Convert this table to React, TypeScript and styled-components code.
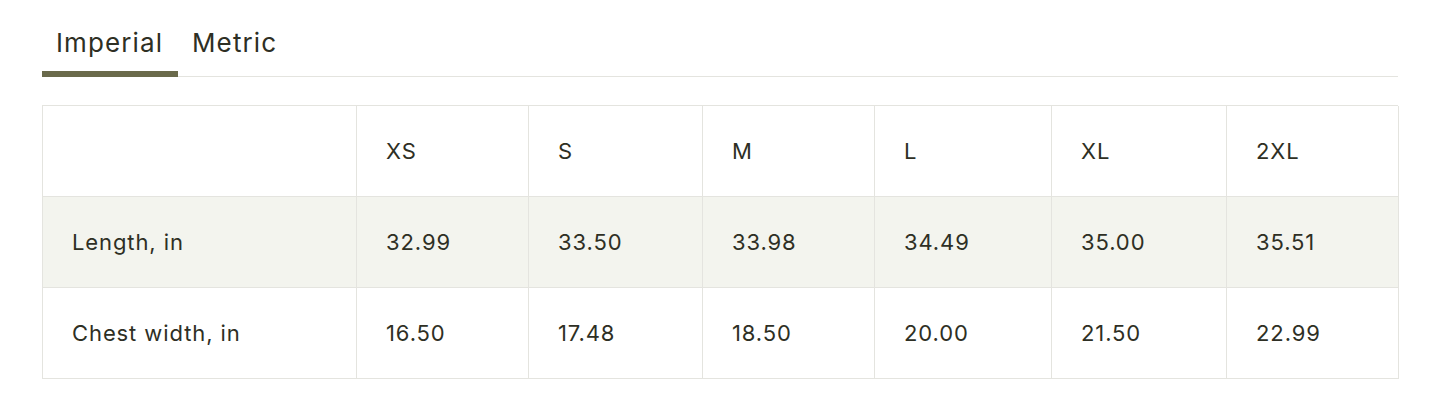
import React, { useState } from "react";
import styled, { createGlobalStyle } from "styled-components";

const Global = createGlobalStyle`
  html, body { margin: 0; padding: 0; background: #ffffff; }
  body { font-family: Inter, "Noto Sans", sans-serif; color: #2e2f24; }
`;

const Page = styled.div`
  padding: 19px 42px 0;
`;

const TabBar = styled.div`
  display: flex;
  border-bottom: 1px solid #e4e4df;
  height: 57px;
`;

const Tab = styled.button<{ $active?: boolean }>`
  appearance: none;
  background: none;
  border: none;
  margin: 0 0 -1px;
  padding: 0 15px 6px 14px;
  font-family: inherit;
  font-size: 26px;
  font-weight: 400;
  letter-spacing: 1.1px;
  color: #2e2f24;
  cursor: pointer;
  border-bottom: 6px solid ${(p) => (p.$active ? "#6a6a4b" : "transparent")};
  display: flex;
  align-items: center;
`;

const Table = styled.div`
  margin-top: 28px;
  display: grid;
  grid-template-columns: 314px 172px 174px 172px 177px 175px 172px;
  border-top: 1px solid #e4e4df;
  border-left: 1px solid #e4e4df;
`;

const Cell = styled.div<{ $shade?: boolean }>`
  height: 90px;
  display: flex;
  align-items: center;
  padding-left: 29px;
  font-size: 22px;
  letter-spacing: 0.9px;
  color: #2e2f24;
  background: ${(p) => (p.$shade ? "#f3f4ee" : "#ffffff")};
  border-right: 1px solid #e4e4df;
  border-bottom: 1px solid #e4e4df;
`;

const sizes = ["XS", "S", "M", "L", "XL", "2XL"];
const rows = [
  { label: "Length, in", values: ["32.99", "33.50", "33.98", "34.49", "35.00", "35.51"] },
  { label: "Chest width, in", values: ["16.50", "17.48", "18.50", "20.00", "21.50", "22.99"] },
];

export default function App() {
  const [tab, setTab] = useState("Imperial");
  return (
    <Page>
      <Global />
      <TabBar>
        {["Imperial", "Metric"].map((t) => (
          <Tab key={t} $active={tab === t} onClick={() => setTab(t)}>
            {t}
          </Tab>
        ))}
      </TabBar>
      <Table>
        <Cell />
        {sizes.map((s) => (
          <Cell key={s}>{s}</Cell>
        ))}
        {rows.map((r, i) => (
          <React.Fragment key={r.label}>
            <Cell $shade={i === 0}>{r.label}</Cell>
            {r.values.map((v, j) => (
              <Cell key={j} $shade={i === 0}>
                {v}
              </Cell>
            ))}
          </React.Fragment>
        ))}
      </Table>
    </Page>
  );
}
